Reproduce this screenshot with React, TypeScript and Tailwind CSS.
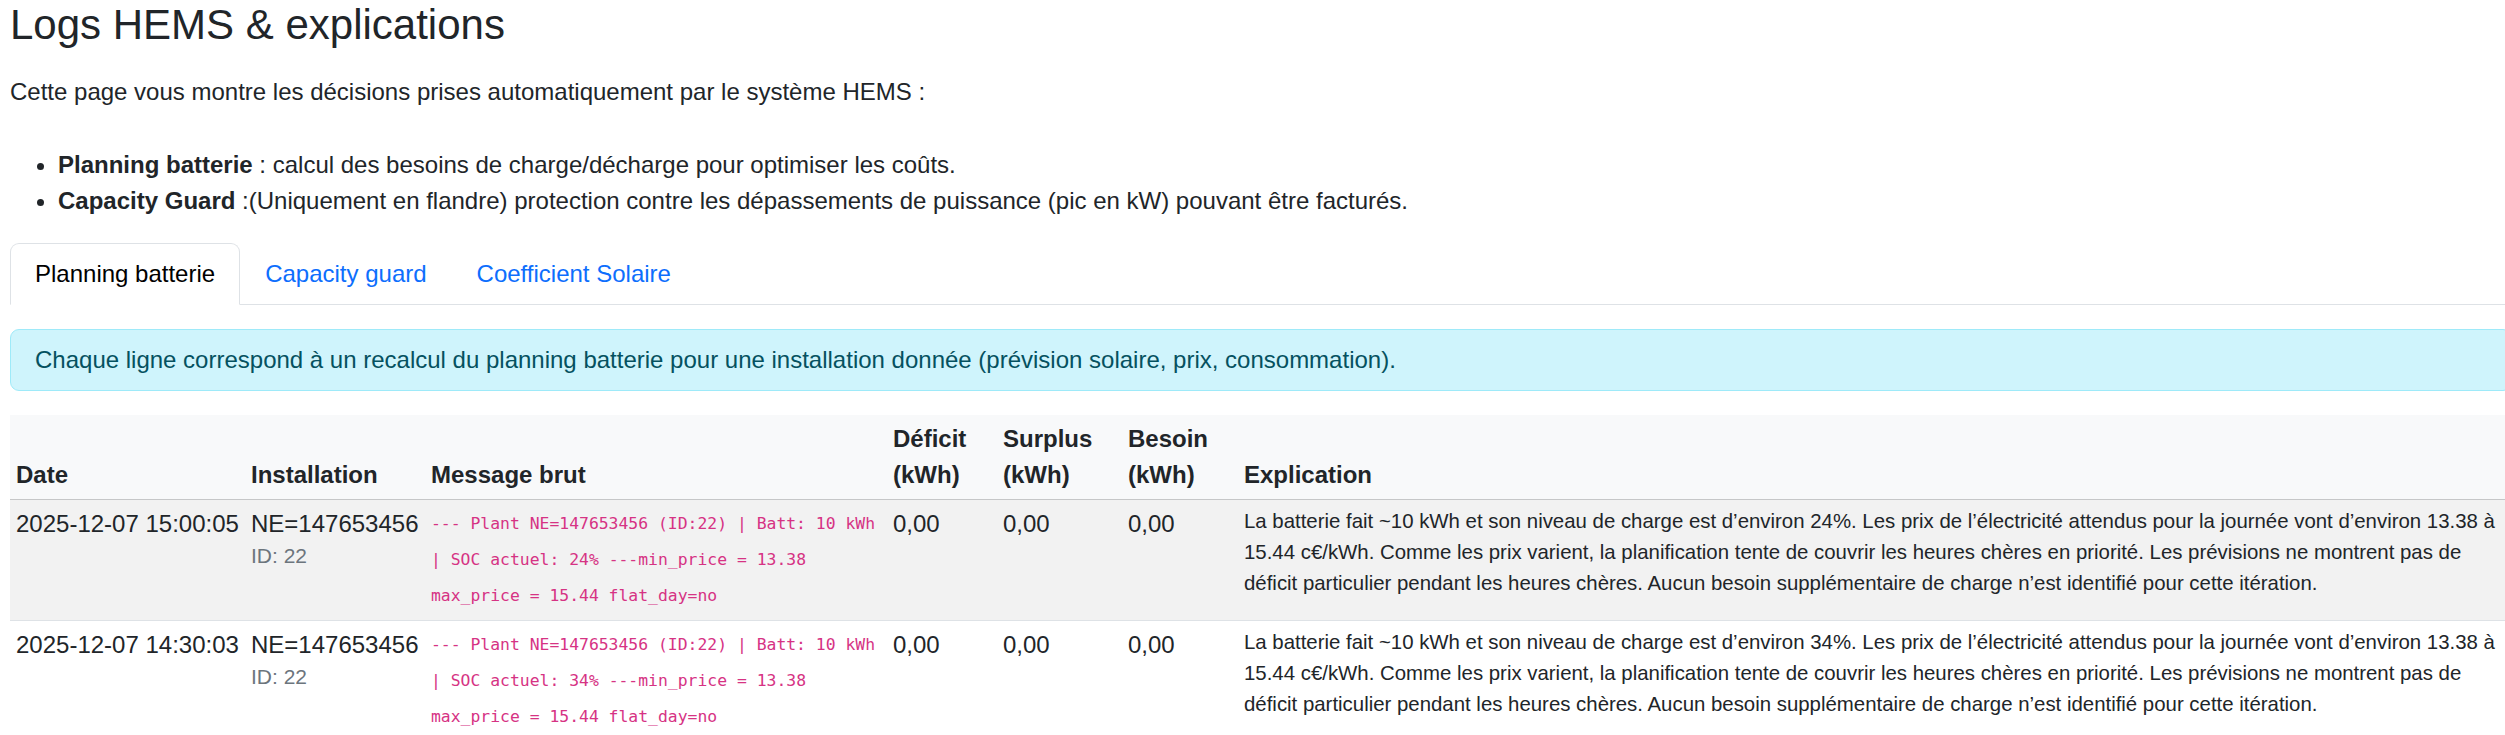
import React from "react";

const rows = [
  {
    date: "2025-12-07 15:00:05",
    soc: "24%",
    striped: true,
  },
  {
    date: "2025-12-07 14:30:03",
    soc: "34%",
    striped: false,
  },
];

export default function App() {
  return (
    <div className="h-[735px] w-full overflow-hidden bg-white font-['Liberation_Sans',Arial,sans-serif] text-[24px] leading-[1.5] text-[#212529]">
      <div className="w-[2522px] px-[10px]">
        <h3 className="mb-[24px] text-[42px] leading-[1.2] font-normal">Logs HEMS &amp; explications</h3>
        <p className="mb-[37px]">Cette page vous montre les décisions prises automatiquement par le système HEMS :</p>
        <ul className="mb-[24px] list-disc pl-[48px]">
          <li>
            <strong className="font-bold">Planning batterie</strong> : calcul des besoins de charge/décharge pour optimiser les coûts.
          </li>
          <li>
            <strong className="font-bold">Capacity Guard</strong> :(Uniquement en flandre) protection contre les dépassements de puissance (pic en kW) pouvant être facturés.
          </li>
        </ul>

        <div className="flex border-b border-[#dee2e6]">
          <a className="-mb-px block rounded-t-[9px] border border-[#dee2e6] border-b-white bg-white px-[24px] py-[12px] text-black">
            Planning batterie
          </a>
          <a className="-mb-px block border border-transparent px-[24px] py-[12px] text-[#0d6efd]">Capacity guard</a>
          <a className="-mb-px block border border-transparent px-[24px] py-[12px] text-[#0d6efd]">Coefficient Solaire</a>
        </div>

        <div className="mt-[24px] mb-[24px] rounded-[9px] border border-[#9eeaf9] bg-[#cff4fc] px-[24px] py-[12px] text-[#055160]">
          Chaque ligne correspond à un recalcul du planning batterie pour une installation donnée (prévision solaire, prix, consommation).
        </div>

        <table className="w-full table-fixed border-collapse">
          <colgroup>
            <col className="w-[235px]" />
            <col className="w-[180px]" />
            <col className="w-[462px]" />
            <col className="w-[110px]" />
            <col className="w-[125px]" />
            <col className="w-[116px]" />
            <col />
          </colgroup>
          <thead className="bg-[#f8f9fa] align-bottom">
            <tr className="border-b border-[#c6c7c8]">
              <th className="p-[6px] text-left font-bold">Date</th>
              <th className="p-[6px] text-left font-bold">Installation</th>
              <th className="p-[6px] text-left font-bold">Message brut</th>
              <th className="p-[6px] text-left font-bold">Déficit (kWh)</th>
              <th className="p-[6px] text-left font-bold">Surplus (kWh)</th>
              <th className="p-[6px] text-left font-bold">Besoin (kWh)</th>
              <th className="p-[6px] text-left font-bold">Explication</th>
            </tr>
          </thead>
          <tbody className="align-top">
            {rows.map((r) => (
              <tr key={r.date} className={`border-b border-[#dee2e6] ${r.striped ? "bg-[#f2f2f2]" : "bg-white"}`}>
                <td className="p-[6px] whitespace-nowrap">{r.date}</td>
                <td className="p-[6px]">
                  <div className="whitespace-nowrap">NE=147653456</div>
                  <div className="text-[21px] leading-[1.3] text-[#6c757d]">ID: 22</div>
                </td>
                <td className="p-[6px]">
                  <code className="block font-['DejaVu_Sans_Mono','Liberation_Mono',monospace] text-[16.4px] leading-[36px] text-[#d63384] break-words">
                    --- Plant NE=147653456 (ID:22) | Batt: 10 kWh | SOC actuel: {r.soc} ---min_price = 13.38 max_price = 15.44 flat_day=no
                  </code>
                </td>
                <td className="p-[6px]">0,00</td>
                <td className="p-[6px]">0,00</td>
                <td className="p-[6px]">0,00</td>
                <td className="p-[6px] text-[20.4px]">
                  La batterie fait ~10 kWh et son niveau de charge est d’environ {r.soc}. Les prix de l’électricité attendus pour la journée vont d’environ 13.38 à 15.44 c€/kWh. Comme les prix varient, la planification tente de couvrir les heures chères en priorité. Les prévisions ne montrent pas de déficit particulier pendant les heures chères. Aucun besoin supplémentaire de charge n’est identifié pour cette itération.
                </td>
              </tr>
            ))}
          </tbody>
        </table>
      </div>
    </div>
  );
}
